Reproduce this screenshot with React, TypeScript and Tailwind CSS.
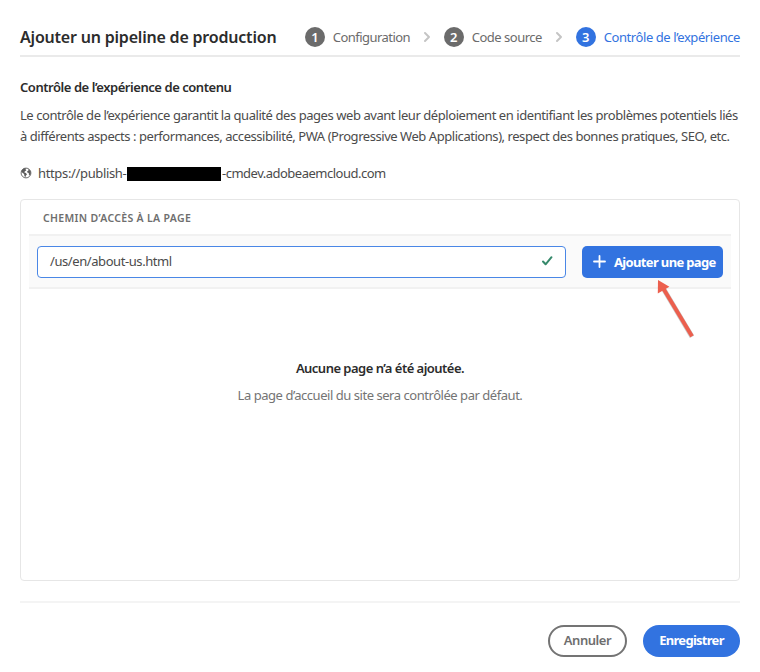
import React from "react";

function Step({ n, label, active, spacing }: { n: number; label: string; active?: boolean; spacing: string }) {
  return (
    <div className="flex items-center gap-2">
      <span
        className={`flex size-5 items-center justify-center rounded-full text-[13px] leading-5 font-semibold text-white ${
          active ? "bg-[#3273e0]" : "bg-[#6b6b6b]"
        }`}
      >
        {n}
      </span>
      <span className={`text-[13px] leading-5 ${spacing} ${active ? "text-[#3273e0]" : "text-[#6b6b6b]"}`}>{label}</span>
    </div>
  );
}

function Chevron() {
  return (
    <svg className="h-[10px] w-[8px]" viewBox="0 0 8 10" fill="none" stroke="#c4c4c4" strokeWidth="1.9" strokeLinecap="round" strokeLinejoin="round">
      <path d="M2 1 L6 5 L2 9" />
    </svg>
  );
}

export default function App() {
  return (
    <div className="relative flex h-[672px] w-[760px] flex-col overflow-hidden bg-white px-5 font-['Noto_Sans',sans-serif] whitespace-nowrap text-[#4b4b4b]">
      <header className="flex h-[57px] shrink-0 items-center border-b-2 border-[#eaeaea] pt-[19px]">
        <h1 className="-mt-px w-[285px] text-[16px] leading-6 font-semibold tracking-[-0.2px] text-[#2c2c2c]">Ajouter un pipeline de production</h1>
        <div className="flex w-[118px] items-center"><Step n={1} label="Configuration" spacing="tracking-[-0.55px]" /></div>
        <div className="w-[21px]"><Chevron /></div>
        <div className="flex w-[111px] items-center"><Step n={2} label="Code source" spacing="tracking-[-0.5px]" /></div>
        <div className="w-[21px]"><Chevron /></div>
        <Step n={3} label="Contrôle de l’expérience" active spacing="tracking-[-0.42px]" />
      </header>

      <h2 className="mt-5 text-[13px] leading-5 font-semibold tracking-[-0.45px] text-[#2c2c2c]">Contrôle de l’expérience de contenu</h2>
      <div className="mt-2 text-[13px] leading-[21px]">
        <p className="tracking-[-0.44px]">Le contrôle de l’expérience garantit la qualité des pages web avant leur déploiement en identifiant les problèmes potentiels liés</p>
        <p className="tracking-[-0.45px]">à différents aspects : performances, accessibilité, PWA (Progressive Web Applications), respect des bonnes pratiques, SEO, etc.</p>
      </div>

      <div className="mt-4 flex h-5 items-center text-[13px] leading-5">
        <svg className="mr-[6px] size-3" viewBox="0 0 12 12">
          <circle cx="6" cy="6" r="4.9" fill="none" stroke="#5c5c5c" strokeWidth="0.9" />
          <path fill="#5c5c5c" d="M2 2.8 L4 1.2 L6.2 1.4 L5.5 2.6 L6.4 3.3 L5 4.2 L4.2 5.3 L5.8 6 L7 7.2 L6 8.6 L5.2 10.4 L4.3 8.6 L4.1 6.9 L2.4 5.7 L1.3 4.4Z M8.1 2.2 L9.5 2.7 L10.6 4.6 L10.7 6.5 L9.7 8.4 L8.8 7.2 L8.8 6 L7.3 5.6 L7.2 4.2 L8.5 3.4Z" />
        </svg>
        <span className="w-[89px] tracking-[-0.35px]">https://publish-</span>
        <span className="mt-[2px] h-[14px] w-[94px] bg-black" />
        <span className="ml-px tracking-[-0.5px]">-cmdev.adobeaemcloud.com</span>
      </div>

      <section className="mt-4 flex h-[382px] shrink-0 flex-col rounded-[4px] border border-[#e6e6e6] px-2">
        <div className="h-[34px] pt-[8px] pl-[14px] text-[10.5px] leading-5 font-semibold tracking-[0.33px] text-[#6e6e6e]">CHEMIN D’ACCÈS À LA PAGE</div>
        <div className="flex h-[55px] items-center justify-between border-y-2 border-[#f1f1f1] bg-[#fafafa] px-2">
          <div className="flex h-8 w-[529px] items-center justify-between rounded-[4px] border border-[#4a87e6] bg-white pr-3 pl-[12px]">
            <span className="-mt-px text-[13px] leading-5 tracking-[-0.42px]">/us/en/about-us.html</span>
            <svg className="-mt-px h-3 w-3" viewBox="0 0 12 12" fill="none" stroke="#36896b" strokeWidth="2" strokeLinecap="round" strokeLinejoin="round">
              <path d="M2 6.5 L4.6 9.3 L10.5 2.2" />
            </svg>
          </div>
          <button className="flex h-8 w-[141px] items-center rounded-[5px] bg-[#3273e0] pl-[11px] text-white">
            <svg className="mr-[8px] size-[13px]" viewBox="0 0 13 13" stroke="white" strokeWidth="1.8" strokeLinecap="round">
              <path d="M6.5 1 V12 M1 6.5 H12" />
            </svg>
            <span className="text-[13px] leading-5 font-bold tracking-[-0.65px]">Ajouter une page</span>
          </button>
        </div>
        <div className="flex flex-col items-center pt-[69px]">
          <p className="text-[13px] leading-5 font-semibold tracking-[-0.52px] text-[#2c2c2c]">Aucune page n’a été ajoutée.</p>
          <p className="mt-[7px] text-[13px] leading-5 tracking-[-0.46px] text-[#747474]">La page d’accueil du site sera contrôlée par défaut.</p>
        </div>
      </section>

      <footer className="mt-5 flex shrink-0 justify-end gap-4 border-t-2 border-[#f4f4f4] pt-[22px]">
        <button className="flex h-8 w-[79px] items-center justify-center rounded-full border-2 border-[#747474] pb-[2px] text-[13px] leading-5 font-semibold tracking-[-0.45px] text-[#6e6e6e]">Annuler</button>
        <button className="flex h-8 w-[97px] items-center justify-center rounded-full bg-[#3273e0] pb-[2px] text-[13px] leading-5 font-bold tracking-[-0.72px] text-white">Enregistrer</button>
      </footer>

      <svg className="absolute top-[275px] left-[652px] h-[66px] w-[46px]" viewBox="0 0 46 66">
        <path d="M11 13 L40 61.8" stroke="#8a8a8a" strokeOpacity=".45" strokeWidth="5" fill="none" />
        <path d="M11 13 L40 61.3" stroke="#ec5f4e" strokeWidth="3.9" fill="none" />
        <path d="M6 5 L17.4 11.7 L5.8 18.5Z" fill="#ec5f4e" />
      </svg>
    </div>
  );
}
